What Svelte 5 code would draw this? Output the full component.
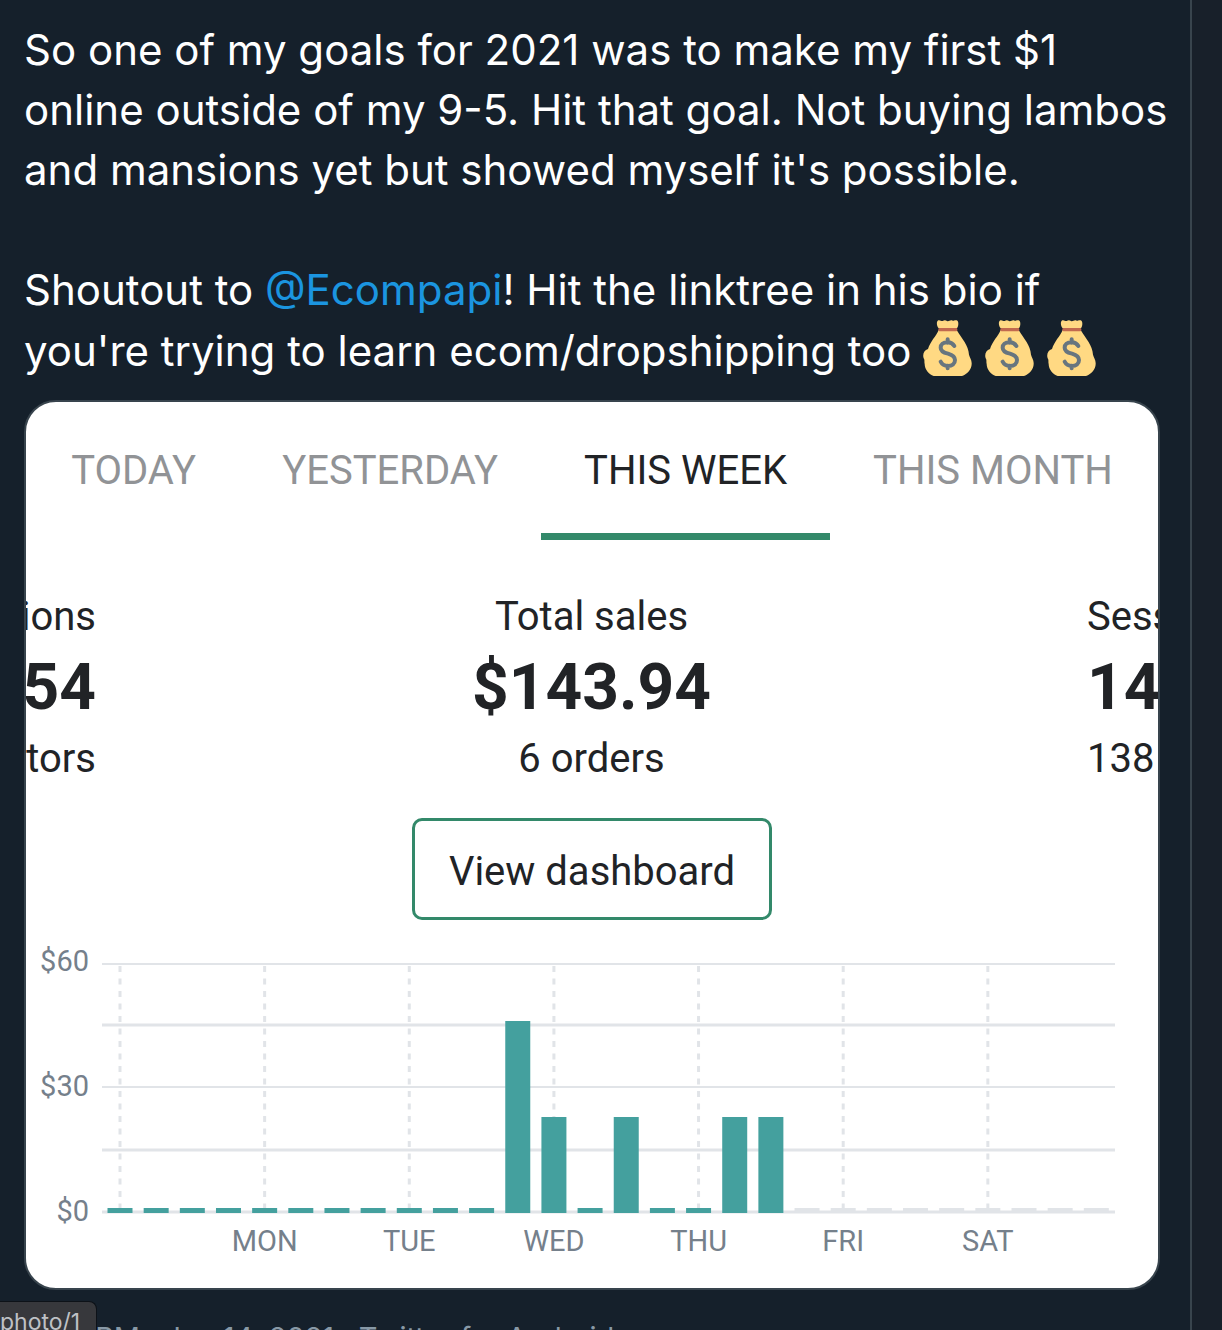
<script>
	const tabs = ["TODAY", "YESTERDAY", "THIS WEEK", "THIS MONTH"];
	let active = $state("THIS WEEK");

	const stats = [
		{ side: "left", label: "ions", value: "54", note: "tors" },
		{ side: "center", label: "Total sales", value: "$143.94", note: "6 orders" },
		{ side: "right", label: "Sess", value: "14", note: "138" },
	];

	// chart geometry, in viewBox units
	const base = 273;
	const first = 94;
	const step = 36.16;
	const barWidth = 25;

	const gridLines = [24, 85, 147, 210, 272];
	const yLabels = [
		{ text: "$60", y: 31 },
		{ text: "$30", y: 156 },
		{ text: "$0", y: 281 },
	];
	const days = ["", "MON", "TUE", "WED", "THU", "FRI", "SAT"];

	// four six-hour slots per day, null = not happened yet
	const sales = [
		0, 0, 0, 0,
		0, 0, 0, 0,
		0, 0, 0, 46,
		23, 0, 23, 0,
		0, 23, 23, null,
		null, null, null, null,
		null, null, null, null,
	];

	function barHeight(value) {
		return value ? Math.round((value / 60) * 250) : 5;
	}
</script>

<main>
	<article>
		<div class="tweet">
			<p>
				So one of my goals for 2021 was to make my first $1 online outside
				of my 9-5. Hit that goal. Not buying lambos and mansions yet but
				showed myself it's possible.
			</p>
			<p>
				Shoutout to <a href="#ecompapi">@Ecompapi</a>! Hit the linktree in
				his bio if you're trying to learn ecom/dropshipping too
				<span class="bags">
					{#each [1, 2, 3] as bag (bag)}
						<svg viewBox="0 0 147 168" role="img" aria-label="money bag">
							<path
								fill="#ffd983"
								d="M47 30C40 48 22 64 15 87C3 91-2 103 2 115C6 120 3 125 5 132C5 148 18 164 32 168H117C134 161 147 147 146 129C146 119 140 113 138 104C136 76 117 56 101 30Z"
							/>
							<path
								fill="#ffd983"
								d="M47 25C40 18 40 3 46 1C51-1 55 4 59 3C63 0 68 0 72 3C77 6 80 0 86 1C91 5 94-1 101 1C108 4 107 18 102 25Z"
							/>
							<rect x="46" y="24" width="57" height="10" rx="4" fill="#c1694f" />
							<path
								fill="none"
								stroke="#67757f"
								stroke-width="12"
								stroke-linecap="round"
								d="M74 58V68M74 137V145M94 78C90 71 83 67 74 67C60 67 53 74 53 83C53 94 62 98 75 101C88 105 96 110 96 120C96 132 87 138 75 138C64 138 57 133 53 125"
							/>
						</svg>
					{/each}
				</span>
			</p>
		</div>

		<section class="card">
			<nav>
				{#each tabs as tab}
					<button class="tab" class:active={tab === active} onclick={() => (active = tab)}>
						{tab}
					</button>
				{/each}
			</nav>

			<div class="stats">
				{#each stats as stat}
					<div class="stat {stat.side}">
						<span>{stat.label}</span>
						<strong>{stat.value}</strong>
						<span>{stat.note}</span>
					</div>
				{/each}
			</div>

			<button class="dashboard">View dashboard</button>

			<svg class="chart" viewBox="0 0 1132 348" role="img" aria-label="Sales this week">
				{#each gridLines as y, i}
					<line class="grid" class:thin={i === 0 || i === 2} x1="76" x2="1089" y1={y} y2={y} />
				{/each}
				{#each days as day, i}
					<line
						class="grid dashed"
						x1={first + i * step * 4}
						x2={first + i * step * 4}
						y1="26"
						y2="268"
					/>
					<text class="day" x={first + i * step * 4} y="311">{day}</text>
				{/each}
				{#each yLabels as label}
					<text class="amount" x="63" y={label.y}>{label.text}</text>
				{/each}
				{#each sales as value, i}
					<rect
						class="bar"
						class:empty={value === null}
						x={first + i * step - barWidth / 2}
						y={base - barHeight(value)}
						width={barWidth}
						height={barHeight(value)}
					/>
				{/each}
			</svg>
		</section>

		<footer>8:48 PM · Jan 14, 2021 · Twitter for Android</footer>
	</article>
	<aside></aside>
	<div class="status">photo/1</div>
</main>

<style>
	:global(body) {
		background: #15202b;
	}

	main {
		display: flex;
		height: 100vh;
		overflow: hidden;
		font-family: Inter, "Liberation Sans", sans-serif;
	}

	article {
		flex: 1;
		min-width: 0;
		padding: 20px 14px 0 24px;
	}

	aside {
		width: 30px;
		background: #18202a;
		border-left: 2px solid #38444d;
	}

	.tweet {
		color: #fff;
		font-size: 42px;
		line-height: 60px;
	}

	p {
		margin: 0 0 60px;
	}

	p:last-child {
		margin-bottom: 19px;
	}

	a {
		color: #1b95e0;
		text-decoration: none;
	}

	.bags {
		display: inline-flex;
		gap: 13px;
		height: 56px;
		vertical-align: -10px;
	}

	.bags svg {
		width: 49px;
		height: 56px;
	}

	.card {
		display: flex;
		flex-direction: column;
		margin-right: 16px;
		overflow: hidden;
		background: #fff;
		border: 2px solid #38444d;
		border-radius: 32px;
		color: #212326;
		font-family: Roboto, sans-serif;
	}

	button {
		background: none;
		border: 0;
		color: inherit;
		font: inherit;
		cursor: pointer;
	}

	nav {
		display: flex;
		justify-content: center;
	}

	.tab {
		height: 138px;
		padding: 6px 43px 0;
		border-bottom: 7px solid transparent;
		color: #919396;
		font-size: 40px;
		white-space: nowrap;
	}

	.tab.active {
		border-color: #33896a;
		color: #212326;
	}

	.stats {
		display: grid;
		grid-template-columns: 70px 1fr 71px;
		padding-top: 47px;
	}

	.stat {
		display: flex;
		flex-direction: column;
		align-items: center;
		min-width: 0;
		overflow: hidden;
		font-size: 40px;
		line-height: 60px;
	}

	.stat.left {
		align-items: flex-end;
	}

	.stat.right {
		align-items: flex-start;
	}

	.stat strong {
		font-size: 64px;
		line-height: 82px;
	}

	.dashboard {
		align-self: center;
		height: 102px;
		margin-top: 29px;
		padding: 4px 34px 0;
		border: 3px solid #33896a;
		border-radius: 10px;
		font-size: 40px;
	}

	.chart {
		display: block;
		width: 100%;
		margin-top: 20px;
	}

	.grid {
		stroke: #e1e4e8;
		stroke-width: 3;
	}

	.thin {
		stroke-width: 2;
	}

	.dashed {
		stroke-dasharray: 6 6.5;
	}

	.chart text {
		fill: #75808b;
		font-size: 29px;
	}

	.day {
		text-anchor: middle;
	}

	.amount {
		text-anchor: end;
	}

	.bar {
		fill: #44a09e;
	}

	.bar.empty {
		fill: #e1e4e8;
	}

	footer {
		padding-top: 28px;
		color: #8899a6;
		font-size: 29px;
		line-height: 40px;
		white-space: nowrap;
	}

	/* browser link preview over the page corner */
	.status {
		position: fixed;
		left: 0;
		bottom: 0;
		height: 28px;
		padding-right: 16px;
		overflow: hidden;
		background: #37383c;
		border: 1px solid #0d1218;
		border-width: 1px 1px 0 0;
		border-radius: 0 8px 0 0;
		color: #bfc1c5;
		font-size: 23px;
		line-height: 40px;
	}
</style>
